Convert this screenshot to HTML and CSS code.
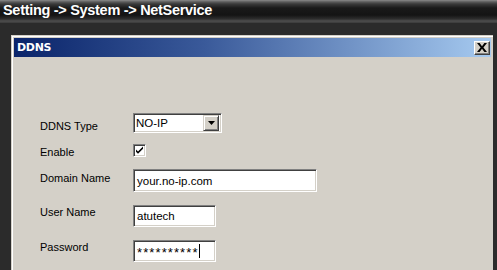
FILE: index.html
```html
<!DOCTYPE html>
<html>
<head>
<meta charset="utf-8">
<link rel="stylesheet" href="styles.css">
</head>
<body>
<div class="topbar"><span class="crumb">Setting -&gt; System -&gt; NetService</span></div>
<div class="dialog">
  <div class="titlebar">
    <span class="title">DDNS</span>
    <span class="close"><svg width="10" height="9" viewBox="0 0 10 9"><path d="M0 0h2.6L5 3.2 7.4 0H10L6.4 4.5 10 9H7.4L5 5.8 2.6 9H0l3.6-4.5z" fill="#000"/></svg></span>
  </div>
  <div class="body">
    <div class="form">
      <div class="row r1">
        <span class="label">DDNS Type</span>
        <div class="select field"><span class="val">NO-IP</span><span class="drop"><svg width="7" height="4" viewBox="0 0 7 4"><path d="M0 0h7L3.5 4z" fill="#000"/></svg></span></div>
      </div>
      <div class="row r2">
        <span class="label">Enable</span>
        <span class="check"><svg width="9" height="9" viewBox="0 0 9 9"><path d="M1 3.5l2 2 5-5v2.2l-5 5-2-2z" fill="#000"/></svg></span>
      </div>
      <div class="row r3">
        <span class="label">Domain Name</span>
        <div class="field domain">your.no-ip.com</div>
      </div>
      <div class="row r4">
        <span class="label">User Name</span>
        <div class="field short">atutech</div>
      </div>
      <div class="row r5">
        <span class="label">Password</span>
        <div class="field short pw">**********<span class="caret"></span></div>
      </div>
    </div>
  </div>
</div>
</body>
</html>
```
FILE: styles.css
```css
html, body {
  margin: 0;
  padding: 0;
  height: 100%;
  overflow: hidden;
}
body {
  background: #2b2b2b;
  font-family: "Liberation Sans", Arial, sans-serif;
}
.topbar {
  height: 23px;
  background: linear-gradient(#8a8a8a 0, #5a5a5a 2px, #3a3a3a 4px, #1a1a1a 8px, #141414 15px, #2e2e2e 19px, #4e4e4e 21px, #3a3a3a 23px);
  box-sizing: border-box;
  padding-left: 3px;
}
.crumb {
  color: #fff;
  font-weight: bold;
  font-size: 14.5px;
  line-height: 21px;
  letter-spacing: -0.3px;
}
.dialog {
  box-sizing: border-box;
  margin: 12px 4px 0 11px;
  background: #d4d0c8;
  border-top: 1px solid #d4d0c8;
  border-left: 1px solid #d4d0c8;
  box-shadow: inset 1px 1px #fff;
  padding: 2px 2px 0 2px;
  height: 235px;
}
.titlebar {
  height: 19px;
  background: linear-gradient(90deg, #0a246a 0%, #3a5a9a 40%, #a6caf0 100%);
  display: flex;
  align-items: center;
  justify-content: space-between;
  padding: 0 1px 0 3px;
}
.title {
  color: #fff;
  font-weight: bold;
  font-size: 11px;
  font-family: "DejaVu Sans", sans-serif;
  letter-spacing: -0.3px;
}
.close {
  width: 16px;
  height: 14px;
  box-sizing: border-box;
  background: #d4d0c8;
  border-top: 1px solid #fff;
  border-left: 1px solid #fff;
  border-right: 1px solid #404040;
  border-bottom: 1px solid #404040;
  box-shadow: inset -1px -1px #808080;
  display: flex;
  align-items: center;
  justify-content: center;
}
.body {
  padding: 56px 0 0 26px;
}
.form {
  display: flex;
  flex-direction: column;
}
.row {
  display: flex;
  align-items: center;
}
.label {
  width: 93px;
  font-size: 11px;
  color: #000;
  position: relative;
}
.r1 .label { top: 3px; }
.r2 { margin-top: 11px; }
.r2 .label { top: 1px; }
.r3 { margin-top: 12px; }
.r3 .label { top: -3px; }
.r4 { margin-top: 13px; }
.r4 .label { top: -4px; }
.r5 { margin-top: 13px; }
.r5 .label { top: -4px; }
.field {
  box-sizing: border-box;
  background: #fff;
  border-top: 1px solid #808080;
  border-left: 1px solid #808080;
  border-right: 1px solid #fff;
  border-bottom: 1px solid #fff;
  box-shadow: inset 1px 1px #404040, inset -1px -1px #d4d0c8;
  font-size: 11.5px;
  color: #000;
  padding-left: 3px;
  display: flex;
  align-items: center;
}
.select {
  width: 89px;
  height: 20px;
  padding: 0 2px 0 2px;
  justify-content: space-between;
}
.drop {
  width: 16px;
  height: 16px;
  box-sizing: border-box;
  background: #d4d0c8;
  border-top: 1px solid #d4d0c8;
  border-left: 1px solid #d4d0c8;
  border-right: 1px solid #404040;
  border-bottom: 1px solid #404040;
  box-shadow: inset 1px 1px #fff, inset -1px -1px #808080;
  display: flex;
  align-items: center;
  justify-content: center;
}
.check {
  width: 13px;
  height: 13px;
  box-sizing: border-box;
  background: #fff;
  border-top: 1px solid #808080;
  border-left: 1px solid #808080;
  border-right: 1px solid #fff;
  border-bottom: 1px solid #fff;
  box-shadow: inset 1px 1px #404040, inset -1px -1px #d4d0c8;
  display: flex;
  align-items: center;
  justify-content: center;
}
.domain {
  width: 184px;
  height: 23px;
}
.short {
  width: 83px;
  height: 22px;
}
.pw {
  font-size: 13px;
  letter-spacing: 1.1px;
  padding-top: 3px;
}
.caret {
  display: inline-block;
  width: 1px;
  height: 14px;
  background: #000;
  margin-left: 0;
  position: relative;
  top: -2px;
}
```
